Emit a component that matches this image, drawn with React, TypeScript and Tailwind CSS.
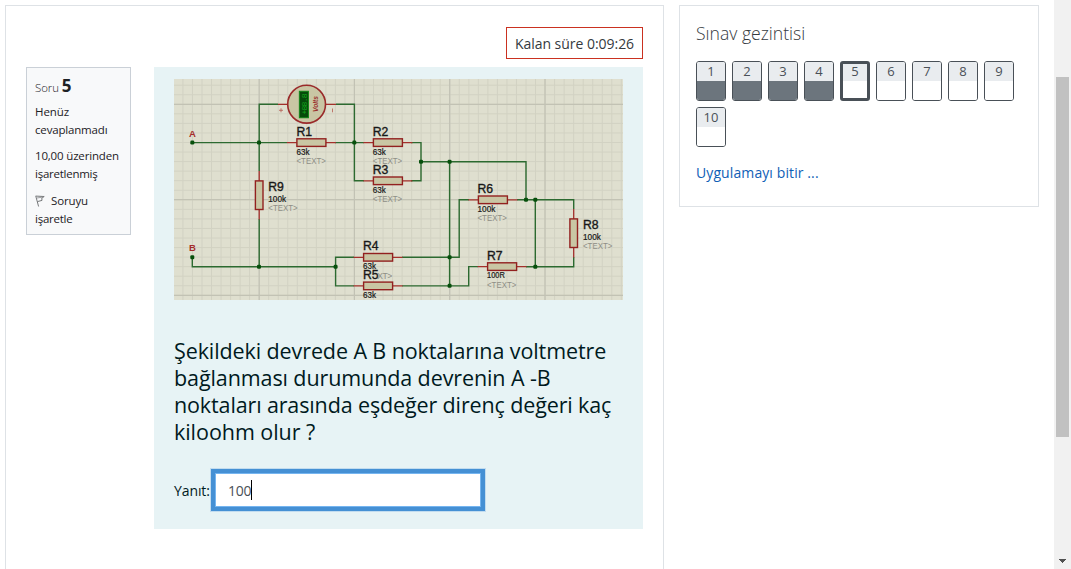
import React from 'react';

type LabelSet = { name: string; value: string; x: number; y: number; short?: boolean; bare?: boolean; beside?: boolean };

const labels: LabelSet[] = [
  { name: 'R1', value: '63k', x: 296.5, y: 136 },
  { name: 'R2', value: '63k', x: 372.8, y: 136 },
  { name: 'R3', value: '63k', x: 372.8, y: 174 },
  { name: 'R4', value: '63k', x: 363, y: 250.3, short: true },
  { name: 'R5', value: '63k', x: 363, y: 279, bare: true },
  { name: 'R6', value: '100k', x: 477.5, y: 193 },
  { name: 'R7', value: '100R', x: 487, y: 259.5 },
  { name: 'R8', value: '100k', x: 583, y: 229, beside: true },
  { name: 'R9', value: '100k', x: 268.3, y: 191, beside: true },
];

const horizontal: [number, number][] = [
  [296.9, 142.6], [373.4, 142.6], [373.4, 180.8], [363.6, 257.3],
  [363.6, 285.9], [478.4, 199.8], [487.6, 266.6],
];
const vertical: [number, number][] = [[573.7, 218.9], [259.2, 180.9]];
const dots: [number, number][] = [
  [192.3, 142.6], [259, 142.6], [354.3, 142.6], [421, 161.8], [449.6, 161.8],
  [526, 199.8], [535.3, 199.8], [535.3, 266.8], [449.6, 257.2], [449.6, 285.8],
  [335.6, 266.8], [259, 266.8], [192.3, 257.2],
];
const minor = Array.from({ length: 48 }, (_, i) => i);

function Circuit() {
  return (
    <svg className="block h-[221px] w-[449px]" viewBox="174 79 449 221" fontFamily="'Liberation Sans', sans-serif">
      <rect x="174" y="79" width="449" height="221" fill="#dfdfcf" />
      <g stroke="#d2d2c3" strokeWidth="1">
        {minor.map((i) => <path key={i} d={`M${173.4 + i * 9.53} 79V300`} />)}
        {minor.slice(0, 23).map((i) => <path key={i} d={`M174 ${85.2 + i * 9.55}H623`} />)}
      </g>
      <path d="M259.2 79V300M354.4 79V300M449.7 79V300M545 79V300M174 104.3H623M174 199.7H623M174 295.3H623" stroke="#c2c2b4" strokeWidth="1.2" />
      <g fill="none" stroke="#2c6a30" strokeWidth="1.4">
        <path d="M192.3 142.6H287M335 142.6H364M278 104.3H259.2V171M259.2 219V266.8M336 104.3H354.4V180.8H364M411 142.6H421V180.8H411M421 161.8H526V199.8M192.3 257.2V266.8H335.6V257.3H354M335.6 266V285.9H354M402 257.3H459.2V199.8H469M402 285.9H468.7V266.6H478M449.6 161.8V285.9M517 199.8H573.7V209M573.7 257V266.8H526M535.3 199.8V266.8" />
      </g>
      <g stroke="#a3302b" strokeWidth="1.3">
        <path d="M278 104.3H288M326 104.3H336" />
        {horizontal.map(([x, y]) => (
          <g key={`${x}-${y}`}>
            <path d={`M${x - 10} ${y}H${x}M${x + 29} ${y}H${x + 39}`} />
            <rect x={x} y={y - 3.8} width="29" height="7.6" fill="#c9c6a4" stroke="#92201f" strokeWidth="1.4" />
          </g>
        ))}
        {vertical.map(([x, y]) => (
          <g key={x}>
            <path d={`M${x} ${y - 10}V${y}M${x} ${y + 28.6}V${y + 38.6}`} />
            <rect x={x - 3.8} y={y} width="7.6" height="28.6" fill="#c9c6a4" stroke="#92201f" strokeWidth="1.4" />
          </g>
        ))}
      </g>
      <circle cx="306.6" cy="104.2" r="18.9" fill="#c9c6a4" stroke="#9a2a2a" strokeWidth="1.6" />
      <rect x="299.3" y="91.2" width="9.2" height="26.6" fill="#064b0b" stroke="#108a16" strokeWidth="0.9" />
      <text transform="translate(306.6 114.5) rotate(-90)" fontSize="8" textLength="21" fill="#12a51b" fontFamily="'Liberation Mono', monospace">+88.8</text>
      <text transform="translate(317.6 112) rotate(-90)" fontSize="8" fontStyle="italic" fontWeight="700" textLength="16" lengthAdjust="spacingAndGlyphs" fill="#9a302d">Volts</text>
      <path d="M279 110.3H283M281 108.3V112.3M332.5 108.5V112.3" stroke="#b45b50" strokeWidth="0.8" />
      {dots.map(([x, y]) => <rect key={`${x}-${y}`} x={x - 2} y={y - 2} width="4" height="4" rx="1.3" fill="#07500c" />)}
      <g fontSize="9.5" fontWeight="700" fill="#a42b2b">
        <text x="188.9" y="137">A</text>
        <text x="189" y="251">B</text>
      </g>
      {labels.map((l) => {
        const valueY = l.y + (l.beside ? 10.8 : 18.8);
        return (
          <g key={l.name} fill="#181818">
            {l.short && <text x={l.x + 14.3} y={valueY + 9.4} fontSize="8.5" textLength="15" fill="#8e8e86">XT&gt;</text>}
            {!l.short && !l.bare && <text x={l.x} y={valueY + 9.4} fontSize="8.5" textLength="29.3" lengthAdjust="spacingAndGlyphs" fill="#8e8e86">&lt;TEXT&gt;</text>}
            <text x={l.x} y={l.y} fontSize="12.2" stroke="#181818" strokeWidth="0.35">{l.name}</text>
            <text x={l.x} y={valueY} fontSize="8.5" textLength={l.value.length === 3 ? 13 : 17.8} lengthAdjust="spacingAndGlyphs" stroke="#181818" strokeWidth="0.2">{l.value}</text>
          </g>
        );
      })}
    </svg>
  );
}

function QuestionInfo() {
  return (
    <aside className="h-[168px] w-[105px] shrink-0 border border-[#cad0d7] bg-[#f8f9fa] pt-[9px] pl-2 text-[11.5px] leading-[18px] whitespace-nowrap text-[#1d2125]">
      <h3 className="flex h-[18px] items-baseline gap-[3px]">
        <span className="text-[11.4px] font-light tracking-[-0.05px]">Soru</span>
        <span className="text-[17px] font-bold">5</span>
      </h3>
      <div className="mt-[8px] tracking-[-0.1px]">Henüz<br /><span className="tracking-[-0.17px]">cevaplanmadı</span></div>
      <div className="mt-2"><span className="tracking-[-0.17px]">10,00 üzerinden</span><br /><span className="tracking-[-0.25px]">işaretlenmiş</span></div>
      <div className="mt-[9px]">
        <span className="flex items-center tracking-[-0.15px]">
          <svg className="mr-[6px] h-3 w-[10px]" viewBox="0 0 10 12" fill="none" stroke="#77797b" strokeWidth="1">
            <path d="M.7.8 3.6 11.5M1 1.1 9.2 1.5 6.8 3.2 7 5.4 2.4 6.6" />
            <path d="M2 3 7 2.2" strokeWidth=".7" />
          </svg>
          Soruyu
        </span>
        <span className="tracking-[-0.25px]">işaretle</span>
      </div>
    </aside>
  );
}

function NavButton({ n }: { n: number }) {
  const current = n === 5;
  return (
    <a className={`flex h-10 w-[30px] flex-col overflow-hidden rounded-[3px] border-[#495057] text-center text-[13px] leading-[19px] text-[#495057] ${current ? 'border-[3px]' : 'border'}`}>
      <span className={`shrink-0 bg-[#e9ecef] ${current ? 'h-[17px] leading-[15px]' : 'h-[19px]'}`}>{n}</span>
      <span className={`flex-1 ${n < 5 ? 'bg-[#6c757d]' : 'bg-white'}`} />
    </a>
  );
}

export default function App() {
  return (
    <div className="flex h-[569px] w-[1071px] overflow-hidden bg-white font-['Open_Sans','Noto_Sans',sans-serif] text-[#1d2125]">
      <main className="mt-[5px] ml-[5px] h-[580px] w-[659px] shrink-0 border border-[#dee2e6] px-5 pt-[21px]">
        <div className="flex justify-end">
          <div className="flex h-8 w-[137px] items-center justify-center border border-[#ca3120] text-[14px] tracking-[-0.03px] whitespace-nowrap text-[#343a40]">Kalan süre 0:09:26</div>
        </div>
        <div className="mt-2 flex justify-between">
          <QuestionInfo />
          <section className="h-[462px] w-[489px] bg-[#e7f3f5] px-5 pt-3 text-[#001a1e]">
            <Circuit />
            <p className="mt-[37px] text-[21.5px] leading-[27px] whitespace-nowrap">
              <span className="block tracking-[-0.1px]">Şekildeki devrede A B noktalarına voltmetre</span>
              <span className="block tracking-[-0.1px]">bağlanması durumunda devrenin A -B</span>
              <span className="block tracking-[-0.13px]">noktaları arasında eşdeğer direnç değeri kaç</span>
              <span className="block tracking-[-0.05px]">kiloohm olur ?</span>
            </p>
            <div className="mt-6 flex items-center">
              <label className="w-[37px] text-[14px] tracking-[-0.1px] whitespace-nowrap">Yanıt:</label>
              <div className="flex h-[42px] w-[274px] items-center border-4 border-[#4590d4] bg-white pl-[13px] text-[14px] text-[#495057] shadow-[0_0_0_1px_#c2dcef,inset_0_0_0_1px_#75b5f0]">
                <span className="tracking-[-0.3px]">100</span><span className="h-5 w-px bg-black" />
              </div>
            </div>
          </section>
        </div>
      </main>
      <aside className="mt-[5px] ml-[15px] h-[202px] w-[360px] shrink-0 border border-[#dee2e6] px-4 pt-[14px]">
        <h2 className="text-[17.6px] leading-[27px] font-light text-[#343a40]">Sınav gezintisi</h2>
        <nav className="mt-[14px] flex flex-wrap gap-[6px]">
          {[1, 2, 3, 4, 5, 6, 7, 8, 9, 10].map((n) => <NavButton key={n} n={n} />)}
        </nav>
        <a className="mt-[15px] block text-[14px] leading-[22px] tracking-[0.1px] text-[#0f60b6]">Uygulamayı bitir ...</a>
      </aside>
      <div className="ml-[15px] flex w-[17px] shrink-0 flex-col items-center bg-[#f1f1f1]">
        <div className="mt-[77px] h-[360px] w-[13px] bg-[#c1c1c1]" />
        <svg className="mt-[122px] h-1 w-[7px]" viewBox="0 0 7 4" shapeRendering="crispEdges"><path d="M0 0H7V1H6V2H5V3H4V4H3V3H2V2H1V1H0Z" fill="#505050" /></svg>
      </div>
    </div>
  );
}
